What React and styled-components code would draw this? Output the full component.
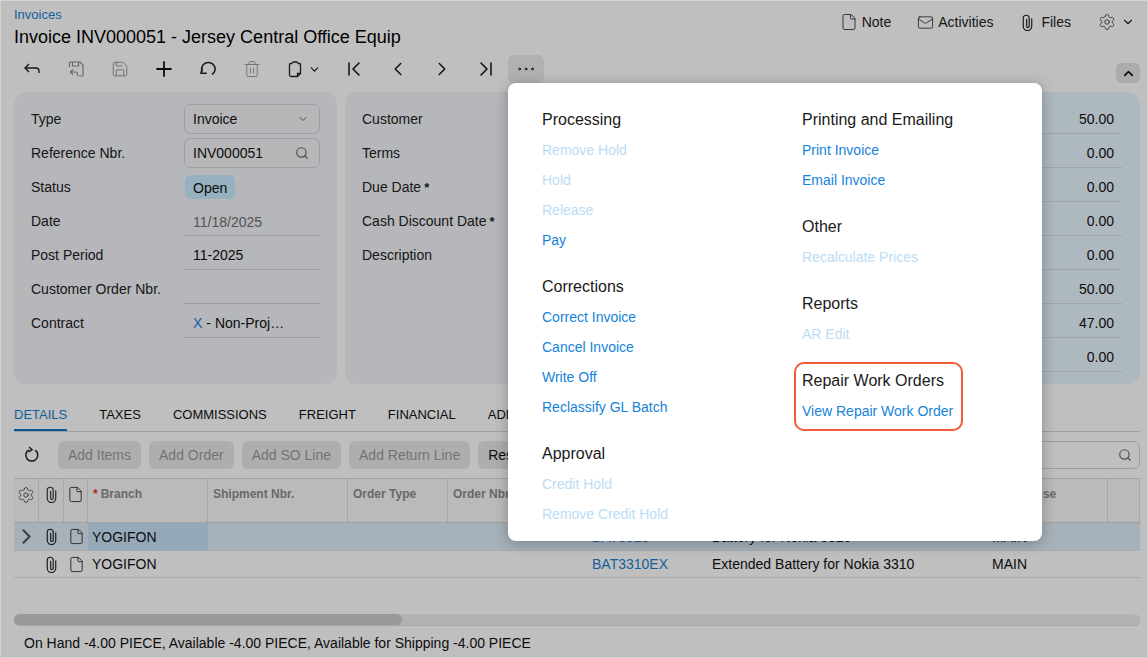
import React from "react";
import styled, { createGlobalStyle, css } from "styled-components";
import {
  ChevronDown,
  ChevronFirst,
  ChevronLast,
  ChevronLeft,
  ChevronRight,
  ChevronUp,
  Ellipsis,
  File,
  Mail,
  Plus,
  Save,
  Search,
  Settings,
  Trash2,
} from "lucide-react";

const BLUE = "#1583d8";
const LINK_DIM = "#1a7fcf";

const GlobalStyle = createGlobalStyle`
  html, body {
    margin: 0;
    padding: 0;
    background: #fff;
  }
  body {
    font-family: "Liberation Sans", Arial, sans-serif;
    font-size: 14px;
    color: #111;
  }
`;

// Icons with no close match in lucide
const Clip = ({ size = 17, color = "#222" }) => (
  <svg width={size} height={size} viewBox="0 0 16 16" fill="none" stroke={color} strokeWidth="1.1">
    <path d="M12 4.5v7a4 4 0 0 1-8 0V4a2.8 2.8 0 0 1 5.6 0v7.5a1.2 1.2 0 0 1-2.4 0V5" strokeLinecap="round" />
  </svg>
);

const BackArrow = () => (
  <svg width="18" height="18" viewBox="0 0 18 18" fill="none" stroke="#222" strokeWidth="1.4">
    <path d="M6 4 2 8l4 4" />
    <path d="M2 8h11a3 3 0 0 1 3 3v2" />
  </svg>
);

const SaveBack = () => (
  <svg width="18" height="18" viewBox="0 0 18 18" fill="none" stroke="#8d8d8d" strokeWidth="1.2">
    <path d="M2.5 7V3a1 1 0 0 1 1-1h9.5l3 3v10a1 1 0 0 1-1 1h-3" />
    <path d="M5.5 2v4h6V2" />
    <path d="M6 9.5 3.5 12 6 14.5" />
    <path d="M3.5 12h5a2 2 0 0 1 2 2v2" />
  </svg>
);

const Revert = () => (
  <svg width="18" height="18" viewBox="0 0 18 18" fill="none" stroke="#222" strokeWidth="1.5">
    <path d="M3.2 11.8A6.8 6.5 0 1 1 13 14.5" />
    <path d="M3.3 7.6 2 13.2l5.8.1" />
  </svg>
);

const Refresh = () => (
  <svg width="18" height="18" viewBox="0 0 18 18" fill="none" stroke="#222" strokeWidth="1.5">
    <path d="M12.2 4.2A6 6 0 1 1 6 3.8" />
    <path d="M6 1 9 3.6 5.6 6" />
  </svg>
);

const Paste = () => (
  <svg width="18" height="18" viewBox="0 0 18 18" fill="none" stroke="#222" strokeWidth="1.3">
    <path d="M6 3.5H4.5a1 1 0 0 0-1 1V15a1.5 1.5 0 0 0 1.5 1.5h6.5l3-3V4.5a1 1 0 0 0-1-1H12" />
    <path d="M6.5 3.5V3a1 1 0 0 1 1-1h3a1 1 0 0 1 1 1v.5" />
    <path d="M11.5 16.5v-3h3" />
  </svg>
);

const Page = styled.div`
  position: relative;
  box-sizing: border-box;
  width: 1148px;
  height: 658px;
  overflow: hidden;
  border: 1px solid #d4d4d4;
  background: #fff;
  display: flex;
  flex-direction: column;
`;

const Header = styled.header`
  display: flex;
  justify-content: space-between;
  align-items: flex-start;
  height: 54px;
  padding: 0 12px 0 13px;
`;

const Crumb = styled.a`
  display: block;
  margin-top: 7px;
  font-size: 13px;
  line-height: 14px;
  color: ${LINK_DIM};
`;

const Title = styled.h1`
  margin: 3px 0 0;
  font-size: 18px;
  font-weight: 400;
  line-height: 24px;
  color: #000;
`;

const HeaderActions = styled.div`
  display: flex;
  align-items: center;
  height: 20px;
  margin-top: 11px;
`;

const HeaderAction = styled.span`
  display: flex;
  align-items: center;
  gap: ${(p) => p.$gap || 4}px;
  margin-left: ${(p) => p.$left || 0}px;
  color: #222;
`;

const Toolbar = styled.div`
  display: flex;
  align-items: center;
  height: 28px;
  padding: 0 7px 0 9px;
  margin-bottom: 9px;
`;

const ToolButton = styled.span`
  display: flex;
  align-items: center;
  justify-content: center;
  flex: none;
  width: ${(p) => p.$w || 44}px;
  height: 28px;
  gap: 4px;
  border-radius: 6px;
  ${(p) =>
    p.$active &&
    css`
      background: #ededed;
    `}
`;

const CollapseButton = styled.span`
  display: flex;
  align-items: center;
  justify-content: center;
  width: 24px;
  height: 20px;
  margin: 8px 0 0 auto;
  border-radius: 5px;
  background: #e6e6e6;
`;

const Panels = styled.section`
  display: flex;
  gap: 8px;
  height: 292px;
  margin: 0 7px 0 13px;
`;

const Panel = styled.div`
  box-sizing: border-box;
  flex: ${(p) => p.$flex || "none"};
  width: ${(p) => (p.$w ? `${p.$w}px` : "auto")};
  padding: 12px ${(p) => p.$right || 17}px 0 17px;
  border-radius: 12px;
  background: ${(p) => (p.$tint ? "#e9f6ff" : "#f2f4f8")};
  display: flex;
  flex-direction: column;
  gap: 4px;
`;

const FormRow = styled.div`
  display: grid;
  grid-template-columns: 153px 136px;
  align-items: center;
  height: 30px;
`;

const Label = styled.span`
  color: #222;
  white-space: nowrap;
`;

const Star = styled.b`
  margin-left: 3px;
  font-size: 13px;
  font-weight: 700;
`;

const BoxField = styled.div`
  box-sizing: border-box;
  height: 30px;
  display: flex;
  align-items: center;
  justify-content: space-between;
  padding: 0 10px 0 8px;
  border: 1px solid #d3d5d9;
  border-radius: 6px;
  background: #f4f5f8;
`;

const LineField = styled.div`
  box-sizing: border-box;
  height: 30px;
  display: flex;
  align-items: center;
  padding: ${(p) => (p.$dim ? "2px" : "0")} 0 0 9px;
  border-bottom: 1px solid #d0d2d6;
  color: ${(p) => (p.$dim ? "#707070" : "#111")};
`;

const Badge = styled.span`
  justify-self: start;
  margin-left: 1px;
  padding: 0 8px;
  height: 24px;
  line-height: 26px;
  border-radius: 6px;
  background: #c9ecff;
  color: #111;
`;

const IdLink = styled.span`
  color: ${LINK_DIM};
  margin-right: 4px;
`;

const TotalRow = styled.div`
  box-sizing: border-box;
  height: 30px;
  display: flex;
  align-items: center;
  justify-content: flex-end;
  padding-right: 8px;
  border-bottom: 1px solid #d3dde6;
  color: #111;
`;

const Tabs = styled.nav`
  display: flex;
  gap: 32px;
  height: 28px;
  margin: 19px 7px 0 13px;
  border-bottom: 1px solid #d6d6d6;
`;

const Tab = styled.span`
  box-sizing: border-box;
  height: 28px;
  padding-top: 4px;
  font-size: 13px;
  line-height: 16px;
  white-space: nowrap;
  color: ${(p) => (p.$active ? LINK_DIM : "#111")};
  border-bottom: 2px solid ${(p) => (p.$active ? "#0a74c4" : "transparent")};
`;

const GridBar = styled.div`
  display: flex;
  align-items: center;
  gap: 8px;
  height: 28px;
  margin: 9px 7px 9px 13px;
`;

const RefreshSlot = styled.span`
  display: flex;
  justify-content: center;
  width: 36px;
`;

const BarButton = styled.span`
  height: 28px;
  padding: 0 10px;
  line-height: 28px;
  border-radius: 6px;
  white-space: nowrap;
  background: #e9e9e9;
  color: ${(p) => (p.$off ? "#9a9a9a" : "#111")};
`;

const GridSearch = styled.div`
  box-sizing: border-box;
  display: flex;
  align-items: center;
  justify-content: flex-end;
  width: 300px;
  height: 28px;
  margin-left: auto;
  padding-right: 7px;
  border: 1px solid #d6d6d6;
  border-radius: 6px;
`;

const columns = "25px 25px 24px 120px 140px 100px 136px 120px 280px 124px 32px";

const GridRow = styled.div`
  display: grid;
  grid-template-columns: ${columns};
  height: ${(p) => p.$h || 28}px;
  margin: 0 7px 0 13px;
  box-sizing: border-box;
  border-bottom: 1px solid ${(p) => (p.$head ? "#d9d9d9" : "#e0e4e8")};
  ${(p) =>
    p.$head &&
    css`
      border-top: 1px solid #d9d9d9;
      background: #f9f9f9;
    `}
  ${(p) =>
    p.$selected &&
    css`
      background: #dfedf9;
    `}
`;

const HeadCell = styled.div`
  box-sizing: border-box;
  padding: 8px ${(p) => p.$pad || 5}px 0;
  font-size: 12px;
  font-weight: 700;
  line-height: 14px;
  color: #8c8c8c;
  white-space: nowrap;
  overflow: hidden;
  border-right: 1px solid #dedede;
`;

const IconHead = styled(HeadCell)`
  display: flex;
  justify-content: center;
  padding: 7px 0 0;
`;

const Required = styled.span`
  color: #e53935;
  margin-right: 3px;
`;

const Cell = styled.div`
  display: flex;
  align-items: center;
  justify-content: ${(p) => (p.$icon ? "center" : "flex-start")};
  padding-left: ${(p) => (p.$icon ? 0 : p.$tight ? 4 : 8)}px;
  color: ${(p) => (p.$link ? LINK_DIM : "#111")};
  white-space: nowrap;
  overflow: hidden;
  ${(p) =>
    p.$hit &&
    css`
      background: #c9e2f7;
    `}
`;

const ScrollTrack = styled.div`
  height: 11px;
  margin: 36px 7px 0 13px;
  border-radius: 6px;
  background: #eeeeee;
  box-shadow: 0 1px 0 #dcdcdc;
`;

const ScrollThumb = styled.div`
  width: 388px;
  height: 11px;
  border-radius: 6px;
  background: #cccccc;
`;

const StatusLine = styled.footer`
  margin: 10px 0 0 23px;
  line-height: 16px;
  color: #111;
`;

const Backdrop = styled.div`
  position: absolute;
  inset: -1px;
  background: rgba(0, 0, 0, 0.25);
`;

const Menu = styled.div`
  position: absolute;
  left: 507px;
  top: 82px;
  box-sizing: border-box;
  width: 534px;
  height: 458px;
  padding: 26px 34px;
  display: grid;
  grid-template-columns: 260px 1fr;
  background: #fff;
  border-radius: 8px;
  box-shadow: 0 2px 14px rgba(0, 0, 0, 0.28);
`;

const MenuColumn = styled.div`
  display: flex;
  flex-direction: column;
  gap: 21px;
`;

const MenuGroup = styled.div`
  position: relative;
  width: fit-content;
  ${(p) =>
    p.$marked &&
    css`
      &::after {
        content: "";
        position: absolute;
        inset: -8px -10px -5px -8px;
        border: 2px solid #f4593a;
        border-radius: 10px;
      }
    `}
`;

const MenuTitle = styled.div`
  padding-top: 1px;
  margin-bottom: 5px;
  font-size: 16px;
  line-height: 20px;
  color: #1a1a1a;
`;

const MenuItem = styled.div`
  line-height: 30px;
  white-space: nowrap;
  color: ${(p) => (p.$off ? "#bbdcf4" : BLUE)};
`;

const menuLeft = [
  { title: "Processing", items: [["Remove Hold", 1], ["Hold", 1], ["Release", 1], ["Pay"]] },
  { title: "Corrections", items: [["Correct Invoice"], ["Cancel Invoice"], ["Write Off"], ["Reclassify GL Batch"]] },
  { title: "Approval", items: [["Credit Hold", 1], ["Remove Credit Hold", 1]] },
];

const menuRight = [
  { title: "Printing and Emailing", items: [["Print Invoice"], ["Email Invoice"]] },
  { title: "Other", items: [["Recalculate Prices", 1]] },
  { title: "Reports", items: [["AR Edit", 1]] },
  { title: "Repair Work Orders", items: [["View Repair Work Order"]], marked: true },
];

const totals = ["50.00", "0.00", "0.00", "0.00", "0.00", "50.00", "47.00", "0.00"];

function MenuGroups({ groups }) {
  return (
    <MenuColumn>
      {groups.map((group) => (
        <MenuGroup key={group.title} $marked={group.marked}>
          <MenuTitle>{group.title}</MenuTitle>
          {group.items.map(([label, off]) => (
            <MenuItem key={label} $off={off}>
              {label}
            </MenuItem>
          ))}
        </MenuGroup>
      ))}
    </MenuColumn>
  );
}

function LineRow({ inventory, description, selected }) {
  return (
    <GridRow $selected={selected} $h={selected ? 28 : 27}>
      <Cell $icon>{selected && <ChevronRight size={25} strokeWidth={2} color="#555" />}</Cell>
      <Cell $icon>
        <Clip />
      </Cell>
      <Cell $icon>
        <File size={17} color="#222" strokeWidth={1.2} />
      </Cell>
      <Cell $hit={selected} $tight>
        YOGIFON
      </Cell>
      <Cell />
      <Cell />
      <Cell />
      <Cell $link>{inventory}</Cell>
      <Cell>{description}</Cell>
      <Cell>MAIN</Cell>
      <Cell />
    </GridRow>
  );
}

export default function App() {
  return (
    <>
      <GlobalStyle />
      <Page>
        <Header>
          <div>
            <Crumb>Invoices</Crumb>
            <Title>Invoice INV000051 - Jersey Central Office Equip</Title>
          </div>
          <HeaderActions>
            <HeaderAction>
              <File size={18} strokeWidth={1.1} />
              Note
            </HeaderAction>
            <HeaderAction $left={26}>
              <Mail size={17} strokeWidth={1.1} />
              Activities
            </HeaderAction>
            <HeaderAction $left={26} $gap={5}>
              <Clip />
              Files
            </HeaderAction>
            <HeaderAction $left={27} $gap={5}>
              <Settings size={18} strokeWidth={1} />
              <ChevronDown size={14} />
            </HeaderAction>
          </HeaderActions>
        </Header>

        <Toolbar>
          <ToolButton>
            <BackArrow />
          </ToolButton>
          <ToolButton>
            <SaveBack />
          </ToolButton>
          <ToolButton>
            <Save size={18} strokeWidth={1.2} color="#8d8d8d" />
          </ToolButton>
          <ToolButton>
            <Plus size={24} strokeWidth={1.8} color="#111" />
          </ToolButton>
          <ToolButton>
            <Revert />
          </ToolButton>
          <ToolButton>
            <Trash2 size={18} strokeWidth={1.1} color="#8d8d8d" />
          </ToolButton>
          <ToolButton $w={58}>
            <Paste />
            <ChevronDown size={13} strokeWidth={2} />
          </ToolButton>
          <ToolButton>
            <ChevronFirst size={24} strokeWidth={1.5} />
          </ToolButton>
          <ToolButton>
            <ChevronLeft size={22} strokeWidth={1.6} />
          </ToolButton>
          <ToolButton>
            <ChevronRight size={22} strokeWidth={1.6} />
          </ToolButton>
          <ToolButton>
            <ChevronLast size={24} strokeWidth={1.5} />
          </ToolButton>
          <ToolButton $w={36} $active>
            <Ellipsis size={22} strokeWidth={1} />
          </ToolButton>
          <CollapseButton>
            <ChevronUp size={15} strokeWidth={2.6} />
          </CollapseButton>
        </Toolbar>

        <Panels>
          <Panel $w={323}>
            <FormRow>
              <Label>Type</Label>
              <BoxField>
                Invoice
                <ChevronDown size={12} color="#666" />
              </BoxField>
            </FormRow>
            <FormRow>
              <Label>Reference Nbr.</Label>
              <BoxField>
                INV000051
                <Search size={14} color="#666" />
              </BoxField>
            </FormRow>
            <FormRow>
              <Label>Status</Label>
              <Badge>Open</Badge>
            </FormRow>
            <FormRow>
              <Label>Date</Label>
              <LineField $dim>11/18/2025</LineField>
            </FormRow>
            <FormRow>
              <Label>Post Period</Label>
              <LineField>11-2025</LineField>
            </FormRow>
            <FormRow>
              <Label>Customer Order Nbr.</Label>
              <LineField />
            </FormRow>
            <FormRow>
              <Label>Contract</Label>
              <LineField>
                <IdLink>X</IdLink>- Non-Proj…
              </LineField>
            </FormRow>
          </Panel>

          <Panel $w={455}>
            <FormRow>
              <Label>Customer</Label>
            </FormRow>
            <FormRow>
              <Label>Terms</Label>
            </FormRow>
            <FormRow>
              <Label>
                Due Date<Star>*</Star>
              </Label>
            </FormRow>
            <FormRow>
              <Label>
                Cash Discount Date<Star>*</Star>
              </Label>
            </FormRow>
            <FormRow>
              <Label>Description</Label>
            </FormRow>
          </Panel>

          <Panel $flex="1" $tint $right={18}>
            {totals.map((value, index) => (
              <TotalRow key={index}>{value}</TotalRow>
            ))}
          </Panel>
        </Panels>

        <Tabs>
          <Tab $active>DETAILS</Tab>
          <Tab>TAXES</Tab>
          <Tab>COMMISSIONS</Tab>
          <Tab>FREIGHT</Tab>
          <Tab>FINANCIAL</Tab>
          <Tab>ADDRESSES</Tab>
        </Tabs>

        <GridBar>
          <RefreshSlot>
            <Refresh />
          </RefreshSlot>
          <BarButton $off>Add Items</BarButton>
          <BarButton $off>Add Order</BarButton>
          <BarButton $off>Add SO Line</BarButton>
          <BarButton $off>Add Return Line</BarButton>
          <BarButton>Reset Order</BarButton>
          <GridSearch>
            <Search size={14} color="#666" />
          </GridSearch>
        </GridBar>

        <GridRow $head $h={45}>
          <IconHead>
            <Settings size={18} strokeWidth={1} color="#333" />
          </IconHead>
          <IconHead>
            <Clip color="#333" />
          </IconHead>
          <IconHead>
            <File size={17} strokeWidth={1.2} color="#222" />
          </IconHead>
          <HeadCell>
            <Required>*</Required>Branch
          </HeadCell>
          <HeadCell>Shipment Nbr.</HeadCell>
          <HeadCell>Order Type</HeadCell>
          <HeadCell>Order Nbr.</HeadCell>
          <HeadCell $pad={8}>Inventory ID</HeadCell>
          <HeadCell $pad={8}>Line Description</HeadCell>
          <HeadCell $pad={8}>Warehouse</HeadCell>
          <HeadCell />
        </GridRow>
        <LineRow inventory="BAT3310" description="Battery for Nokia 3310" selected />
        <LineRow inventory="BAT3310EX" description="Extended Battery for Nokia 3310" />

        <ScrollTrack>
          <ScrollThumb />
        </ScrollTrack>
        <StatusLine>On Hand -4.00 PIECE, Available -4.00 PIECE, Available for Shipping -4.00 PIECE</StatusLine>

        <Backdrop />
        <Menu>
          <MenuGroups groups={menuLeft} />
          <MenuGroups groups={menuRight} />
        </Menu>
      </Page>
    </>
  );
}
